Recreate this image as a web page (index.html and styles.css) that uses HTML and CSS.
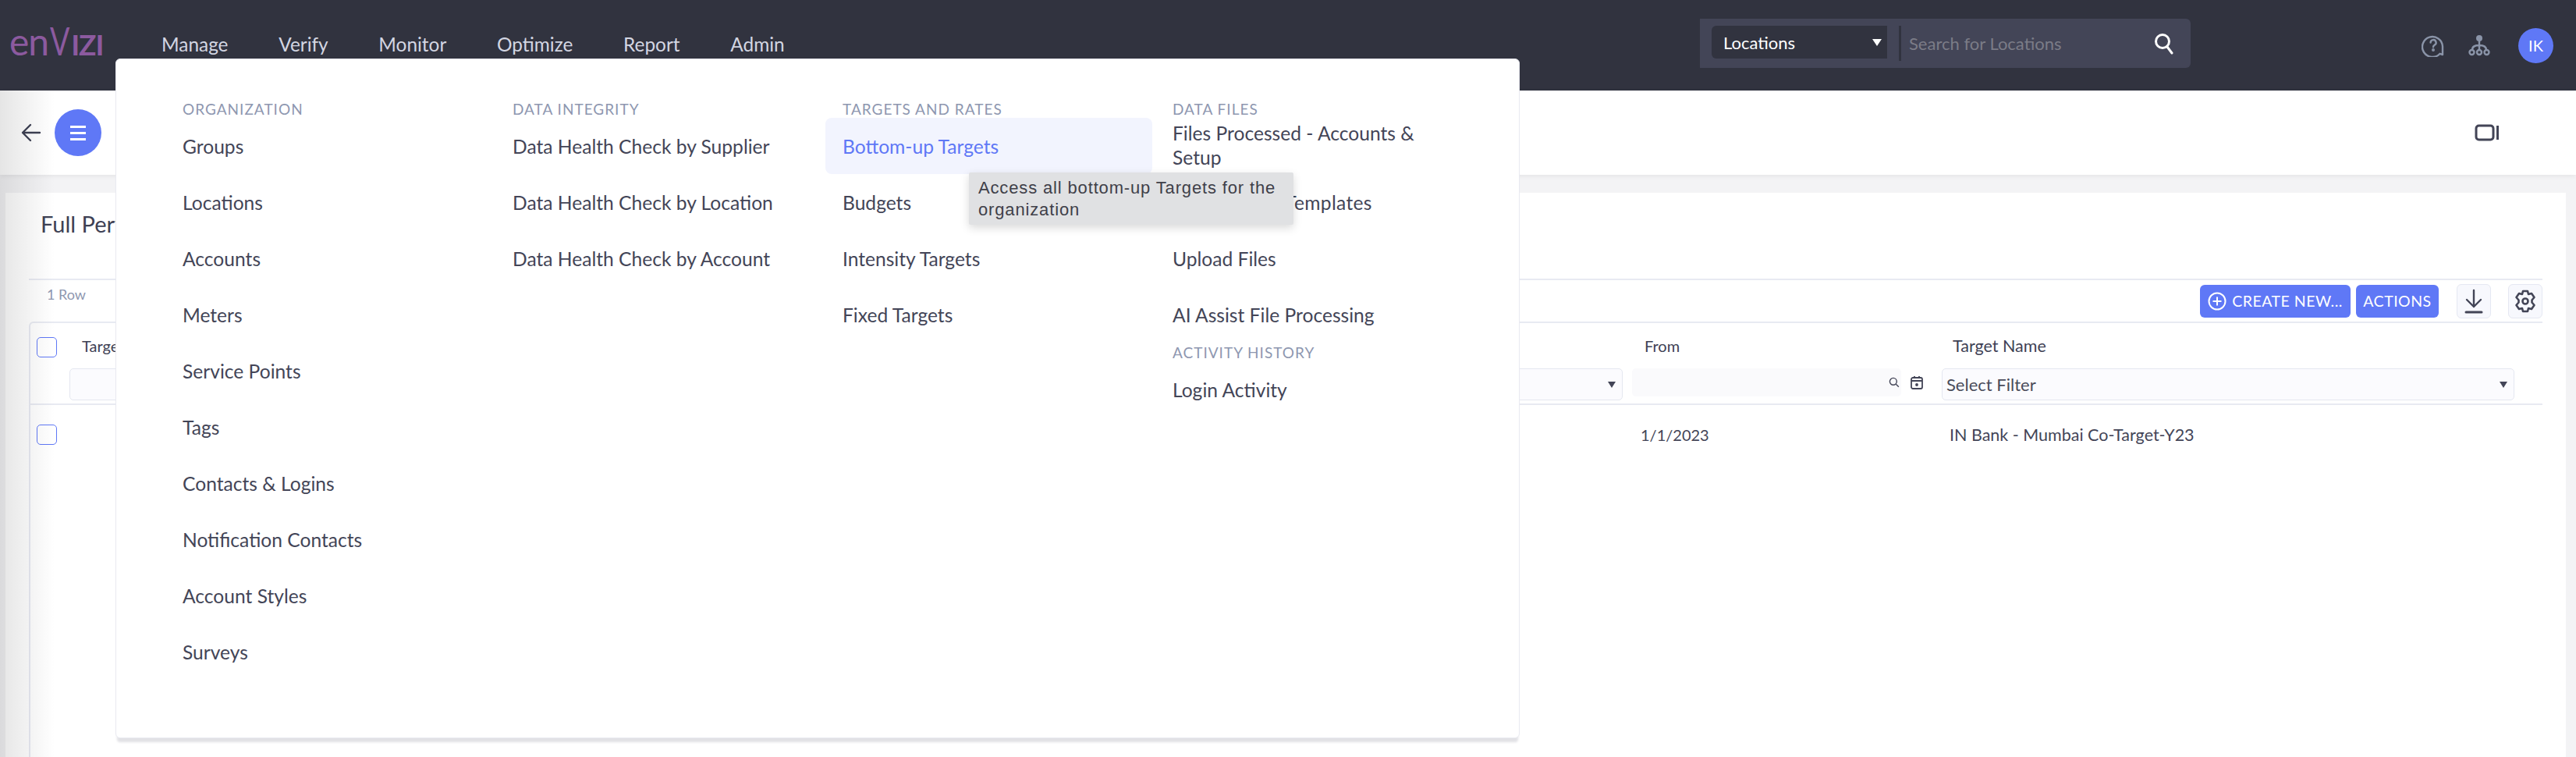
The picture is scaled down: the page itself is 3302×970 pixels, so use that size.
FILE: index.html
```html
<!DOCTYPE html>
<html lang="en">
<head>
    <meta charset="UTF-8">
    <title>Envizi - Targets</title>
    <link rel="stylesheet" href="styles.css">
</head>
<body>
    <header class="topbar">
        <div class="logo">en<span class="logo-v">V</span><span class="logo-izi">IZI</span></div>
        <nav class="main-nav">
            <a href="#">Manage</a>
            <a href="#">Verify</a>
            <a href="#">Monitor</a>
            <a href="#">Optimize</a>
            <a href="#">Report</a>
            <a href="#">Admin</a>
        </nav>
        <div class="search">
            <div class="search-type">Locations<span class="caret caret-white"></span></div>
            <div class="search-input">
                <span>Search for Locations</span>
                <svg width="26" height="28" viewBox="0 0 26 28" fill="none" stroke="#fff" stroke-width="3"><circle cx="11" cy="11" r="8.5"/><path d="M17 18l6 8" stroke-linecap="round"/></svg>
            </div>
        </div>
        <div class="top-icons">
            <svg width="30" height="30" viewBox="0 0 30 30" fill="none" stroke="#8a94a8" stroke-width="2.4"><path d="M27 27l-3.4-1.2A13 13 0 1 1 27 16.5z" stroke-linejoin="round"/><path d="M11.6 11.5a3.5 3.5 0 1 1 5 3.2c-1.2.7-1.6 1.2-1.6 2.6" stroke-linecap="round"/><circle cx="15" cy="21" r=".8" fill="#8a94a8"/></svg>
            <svg width="28" height="28" viewBox="0 0 28 28" fill="none" stroke="#8a94a8" stroke-width="2.4"><circle cx="14" cy="5" r="4" fill="#8a94a8" stroke="none"/><path d="M14 8v12M5 20c0-5 4-6 9-6s9 1 9 6"/><circle cx="4.500" cy="23" r="3"/><circle cx="14" cy="23" r="3"/><circle cx="23.500" cy="23" r="3"/></svg>
            <div class="avatar">IK</div>
        </div>
    </header>

    <div class="toolbar">
        <svg class="back" width="26" height="26" viewBox="0 0 26 26" fill="none" stroke="#3e4154" stroke-width="2.400" stroke-linecap="round" stroke-linejoin="round"><path d="M24 13H3M12 3L2 13l10 10"/></svg>
        <button class="round-btn">
            <span></span><span></span><span></span>
        </button>
        <svg class="window-icon" width="32" height="22" viewBox="0 0 32 22" fill="none" stroke="#434557" stroke-width="3"><rect x="2" y="2" width="22" height="18" rx="3.500"/><path d="M29.500 2v18"/></svg>
    </div>

    <main class="card">
        <h1>Full Performance Targets</h1>
        <div class="count-bar">
            <span class="row-count">1 Row</span>
            <div class="actions">
                <button class="btn btn-create">
                    <svg width="24" height="24" viewBox="0 0 24 24" fill="none" stroke="#fff" stroke-width="2"><circle cx="12" cy="12" r="10.500"/><path d="M12 6.500v11M6.500 12h11"/></svg>
                    CREATE NEW...
                </button>
                <button class="btn btn-actions">ACTIONS</button>
                <button class="icon-btn">
                    <svg width="24" height="32" viewBox="0 0 24 32" fill="none" stroke="#434557" stroke-width="2.400" stroke-linecap="round" stroke-linejoin="round"><path d="M12 2v21M3 14l9 9 9-9"/><path d="M2 30h20" stroke-width="3"/></svg>
                </button>
                <button class="icon-btn">
                    <svg width="28" height="30" viewBox="0 0 28 30" fill="none" stroke="#434557" stroke-width="2.600" stroke-linejoin="round"><path d="M11 2h6l1 4 4-1 3.500 5-3 3.500v3l3 3.500-3.500 5-4-1-1 4h-6l-1-4-4 1-3.500-5 3-3.500v-3l-3-3.500 3.500-5 4 1z"/><circle cx="14" cy="15" r="3.500"/></svg>
                </button>
            </div>
        </div>
        <div class="grid">
            <div class="grid-row grid-head">
                <div class="cell cell-check"><span class="check"></span></div>
                <div class="cell cell-first">
                    <span class="col-title">Target</span>
                    <div class="filter"></div>
                </div>
                <div class="cell cell-mid">
                    <span class="col-title"></span>
                    <div class="filter filter-select"><span class="caret"></span></div>
                </div>
                <div class="cell cell-from">
                    <span class="col-title">From</span>
                    <div class="from-filter">
                        <div class="filter-plain">
                            <svg width="14" height="14" viewBox="0 0 12 12" fill="none" stroke="#434557" stroke-width="1.200"><circle cx="5" cy="5" r="3.800"/><path d="M8 8l3 3"/></svg>
                        </div>
                        <svg width="16" height="18" viewBox="0 0 16 18" fill="none" stroke="#434557" stroke-width="1.800"><rect x="1" y="3" width="14" height="14" rx="2"/><path d="M1 7h14M5 1v3M11 1v3"/><circle cx="8" cy="12" r="1"/></svg>
                    </div>
                </div>
                <div class="cell cell-name">
                    <span class="col-title">Target Name</span>
                    <div class="filter filter-select">Select Filter<span class="caret"></span></div>
                </div>
            </div>
            <div class="grid-row grid-body">
                <div class="cell cell-check"><span class="check"></span></div>
                <div class="cell cell-first"></div>
                <div class="cell cell-mid"></div>
                <div class="cell cell-from">1/1/2023</div>
                <div class="cell cell-name">IN Bank - Mumbai Co-Target-Y23</div>
            </div>
        </div>
    </main>

    <div class="drawer-shade"></div>

    <div class="mega-menu">
        <div class="menu-col">
            <h4>ORGANIZATION</h4>
            <a href="#">Groups</a>
            <a href="#">Locations</a>
            <a href="#">Accounts</a>
            <a href="#">Meters</a>
            <a href="#">Service Points</a>
            <a href="#">Tags</a>
            <a href="#">Contacts &amp; Logins</a>
            <a href="#">Notification Contacts</a>
            <a href="#">Account Styles</a>
            <a href="#">Surveys</a>
        </div>
        <div class="menu-col">
            <h4>DATA INTEGRITY</h4>
            <a href="#">Data Health Check by Supplier</a>
            <a href="#">Data Health Check by Location</a>
            <a href="#">Data Health Check by Account</a>
        </div>
        <div class="menu-col">
            <h4>TARGETS AND RATES</h4>
            <a href="#" class="active">Bottom-up Targets</a>
            <a href="#">Budgets</a>
            <a href="#">Intensity Targets</a>
            <a href="#">Fixed Targets</a>
        </div>
        <div class="menu-col">
            <h4>DATA FILES</h4>
            <a href="#" class="two-lines">Files Processed - Accounts &amp; Setup</a>
            <a href="#" class="wide-item">Data Upload Templates</a>
            <a href="#">Upload Files</a>
            <a href="#">AI Assist File Processing</a>
            <h4 class="sub-head">ACTIVITY HISTORY</h4>
            <a href="#">Login Activity</a>
        </div>
    </div>
    <div class="tooltip">Access all bottom-up Targets for the organization</div>
</body>
</html>
```

FILE: styles.css
```css
* {
    box-sizing: border-box;
}

html, body {
    height: 970px;
    overflow: hidden;
}

body {
    margin: 0;
    position: relative;
    font-family: "Lato", "Noto Sans", sans-serif;
    background-color: #f3f3f5;
    color: #434557;
}

a {
    text-decoration: none;
    color: inherit;
}

button {
    font-family: inherit;
    border: none;
    padding: 0;
}

/* top bar */
.topbar {
    display: flex;
    align-items: center;
    height: 116px;
    background-color: #31333f;
    padding-left: 12px;
    padding-right: 29px;
}

.logo {
    display: flex;
    align-items: baseline;
    flex: none;
    width: 195px;
    height: 60px;
    margin-top: -12px;
    font-size: 48px;
    line-height: 60px;
    color: #8c5a9f;
    letter-spacing: -1px;
}

.logo-v {
    font-size: 50px;
    display: inline-block;
    transform: scaleX(0.75);
    transform-origin: left;
    width: 27px;
    margin-left: 2px;
}

.logo-izi {
    font-size: 37px;
    font-weight: 700;
    letter-spacing: -1px;
}

.main-nav {
    display: flex;
    gap: 64.700px;
    font-size: 24.4px;
    color: #d3d6e2;
    margin-top: -4px;
}

.search {
    display: flex;
    align-items: flex-start;
    width: 629px;
    height: 63px;
    margin-left: auto;
    margin-right: 296px;
    margin-top: -5px;
    padding: 9px 0 0 15px;
    background-color: #434557;
    border-radius: 0 6px 6px 0;
}

.search-type {
    display: flex;
    align-items: center;
    justify-content: space-between;
    width: 225px;
    height: 42px;
    padding: 0 7px 0 15px;
    background-color: #31333f;
    border-radius: 6px 0 0 6px;
    color: #fff;
    font-size: 22px;
}

.search-input {
    display: flex;
    align-items: center;
    justify-content: space-between;
    flex: 1;
    height: 45px;
    margin-left: 15px;
    padding: 0 21px 0 10px;
    border-left: 3px solid #31333f;
    color: #7b7c87;
    font-size: 22px;
}

.caret {
    display: inline-block;
    width: 0;
    height: 0;
    border-left: 5px solid transparent;
    border-right: 5px solid transparent;
    border-top: 8px solid #434557;
}

.caret-white {
    border-left-width: 6px;
    border-right-width: 6px;
    border-top: 9px solid #fff;
}

.top-icons {
    display: flex;
    align-items: center;
    gap: 30px;
}

.avatar {
    display: flex;
    align-items: center;
    justify-content: center;
    width: 45px;
    height: 45px;
    margin-left: 6px;
    border-radius: 50%;
    background-color: #5f78f6;
    color: #fff;
    font-size: 20px;
}

/* toolbar under the top bar */
.toolbar {
    display: flex;
    align-items: center;
    height: 108px;
    padding: 0 98px 0 27px;
    background-color: #fff;
    box-shadow: 0 2px 6px rgba(0, 0, 0, 0.06);
}

.back {
    flex: none;
}

.round-btn {
    display: flex;
    flex-direction: column;
    align-items: center;
    justify-content: center;
    gap: 5px;
    width: 60px;
    height: 60px;
    margin-left: 17px;
    border-radius: 50%;
    background-color: #5f78f6;
}

.round-btn span {
    width: 20px;
    height: 3px;
    background-color: #fff;
}

.window-icon {
    margin-left: auto;
}

/* main card */
.card {
    margin: 23px 13px 0 7px;
    height: 723px;
    padding: 20px 30px 0 30px;
    background-color: #fff;
}

.card h1 {
    margin: 0 0 0 15px;
    font-size: 29px;
    line-height: 40px;
    font-weight: 400;
    color: #3e4154;
    white-space: nowrap;
}

.count-bar {
    display: flex;
    align-items: center;
    justify-content: space-between;
    height: 55px;
    margin-top: 50px;
    border-top: 2px solid #e8eaf2;
}

.row-count {
    margin-left: 23px;
    margin-bottom: 18px;
    font-size: 18px;
    color: #8e97b0;
}

.actions {
    display: flex;
    align-items: center;
}

.btn {
    display: flex;
    align-items: center;
    justify-content: center;
    gap: 7px;
    height: 42px;
    border-radius: 6px;
    background-color: #5f78f6;
    color: #fff;
    font-size: 19.5px;
    letter-spacing: 0.5px;
}

.btn-create {
    width: 193px;
}

.btn-actions {
    width: 106px;
    margin-left: 7px;
    margin-right: 23px;
}

.icon-btn {
    display: flex;
    align-items: center;
    justify-content: center;
    width: 44px;
    height: 44px;
    border: 1px solid #e5e8f2;
    border-radius: 6px;
    background-color: #f7f8fd;
}

.icon-btn + .icon-btn {
    margin-left: 22px;
}

/* table */
.grid {
    height: 558px;
    border-left: 2px solid #e8eaf2;
    border-top: 2px solid #e8eaf2;
    border-top-left-radius: 6px;
}

.grid-row {
    display: flex;
}

.grid-head {
    height: 105px;
    border-bottom: 2px solid #e8eaf2;
    font-size: 20px;
}

.grid-body {
    height: 78px;
    padding-bottom: 2px;
    align-items: center;
    font-size: 20px;
}

.cell-check {
    width: 50px;
    flex: none;
    padding-left: 8px;
}

.check {
    display: block;
    width: 26px;
    height: 26px;
    border: 1px solid #5f78f6;
    border-radius: 5px;
    background-color: #fff;
}

.grid-head .cell-check {
    padding-top: 18px;
}

.cell-first {
    width: 700px;
    flex: none;
    padding-left: 16px;
}

.cell-mid {
    width: 1303px;
    flex: none;
}

.cell-from {
    width: 397px;
    flex: none;
    padding-left: 14px;
}

.grid-head .cell-from .col-title {
    padding-left: 2px;
}

.grid-body .cell-from {
    padding-left: 11px;
}

.cell-name {
    flex: 1;
    font-size: 21.5px;
}

.cell-name .col-title {
    padding-left: 14px;
}

.grid-body .cell-name {
    padding-left: 10px;
}

.col-title {
    display: block;
    height: 58px;
    padding-top: 15px;
    line-height: 28px;
    color: #3e4154;
}

.filter {
    display: flex;
    align-items: center;
    justify-content: space-between;
    height: 41px;
    border: 1px solid #e4e7f0;
    border-radius: 5px;
    background-color: #fbfbfe;
    padding: 0 8px 0 5px;
    font-size: 22px;
    color: #4a4c5a;
}

.filter-select {
    justify-content: space-between;
}

.cell-first .filter {
    margin-left: -16px;
}

.cell-mid .filter {
    justify-content: flex-end;
    margin-right: 12px;
}

.cell-name .filter {
    width: 734px;
}

.from-filter {
    display: flex;
    align-items: center;
    gap: 12px;
    margin-left: -14px;
    height: 36px;
}

.filter-plain {
    display: flex;
    align-items: center;
    justify-content: flex-end;
    width: 345px;
    height: 36px;
    padding-right: 2px;
    border-radius: 5px;
    background-color: #fafafc;
}

/* soft shadow of the drawer along the left edge */
.drawer-shade {
    position: absolute;
    left: 0;
    top: 116px;
    bottom: 0;
    width: 70px;
    background: linear-gradient(to right, rgba(0, 0, 0, 0.1), rgba(0, 0, 0, 0));
    pointer-events: none;
}

/* mega menu, lies over the page */
.mega-menu {
    position: absolute;
    left: 148px;
    top: 75px;
    width: 1800px;
    height: 871px;
    display: flex;
    padding: 51px 0 0 85px;
    background-color: #fff;
    border-radius: 6px;
    border: 1px solid #e9eaf1;
    box-shadow: 0 7px 3px -2px rgba(40, 40, 70, 0.14);
}

.menu-col {
    width: 423px;
    display: flex;
    flex-direction: column;
}

.menu-col h4 {
    margin: 0;
    height: 24px;
    line-height: 26px;
    font-size: 19px;
    font-weight: 400;
    letter-spacing: 1px;
    color: #8e97b0;
}

.menu-col a {
    display: flex;
    align-items: center;
    height: 72px;
    flex: none;
    font-size: 24.6px;
    color: #434557;
}

.menu-col a.active {
    width: 419px;
    margin-left: -22px;
    padding-left: 22px;
    border-radius: 8px;
    background-color: #f2f4fe;
    color: #5f78f6;
}

.menu-col a.two-lines {
    width: 350px;
    line-height: 31px;
    padding-bottom: 2px;
}

.menu-col a.wide-item {
    letter-spacing: 0.3px;
}

.menu-col .sub-head {
    margin-top: 0;
    height: 24px;
}

/* tooltip for the hovered menu item */
.tooltip {
    position: absolute;
    left: 1242px;
    top: 221px;
    width: 416px;
    height: 67px;
    padding: 6px 12px;
    background-color: #e0e1e3;
    border-radius: 2px;
    box-shadow: 0 4px 12px rgba(0, 0, 0, 0.15);
    font-family: "Liberation Sans", Arial, sans-serif;
    font-size: 22px;
    line-height: 28px;
    letter-spacing: 0.85px;
    color: #3f4049;
}
```
